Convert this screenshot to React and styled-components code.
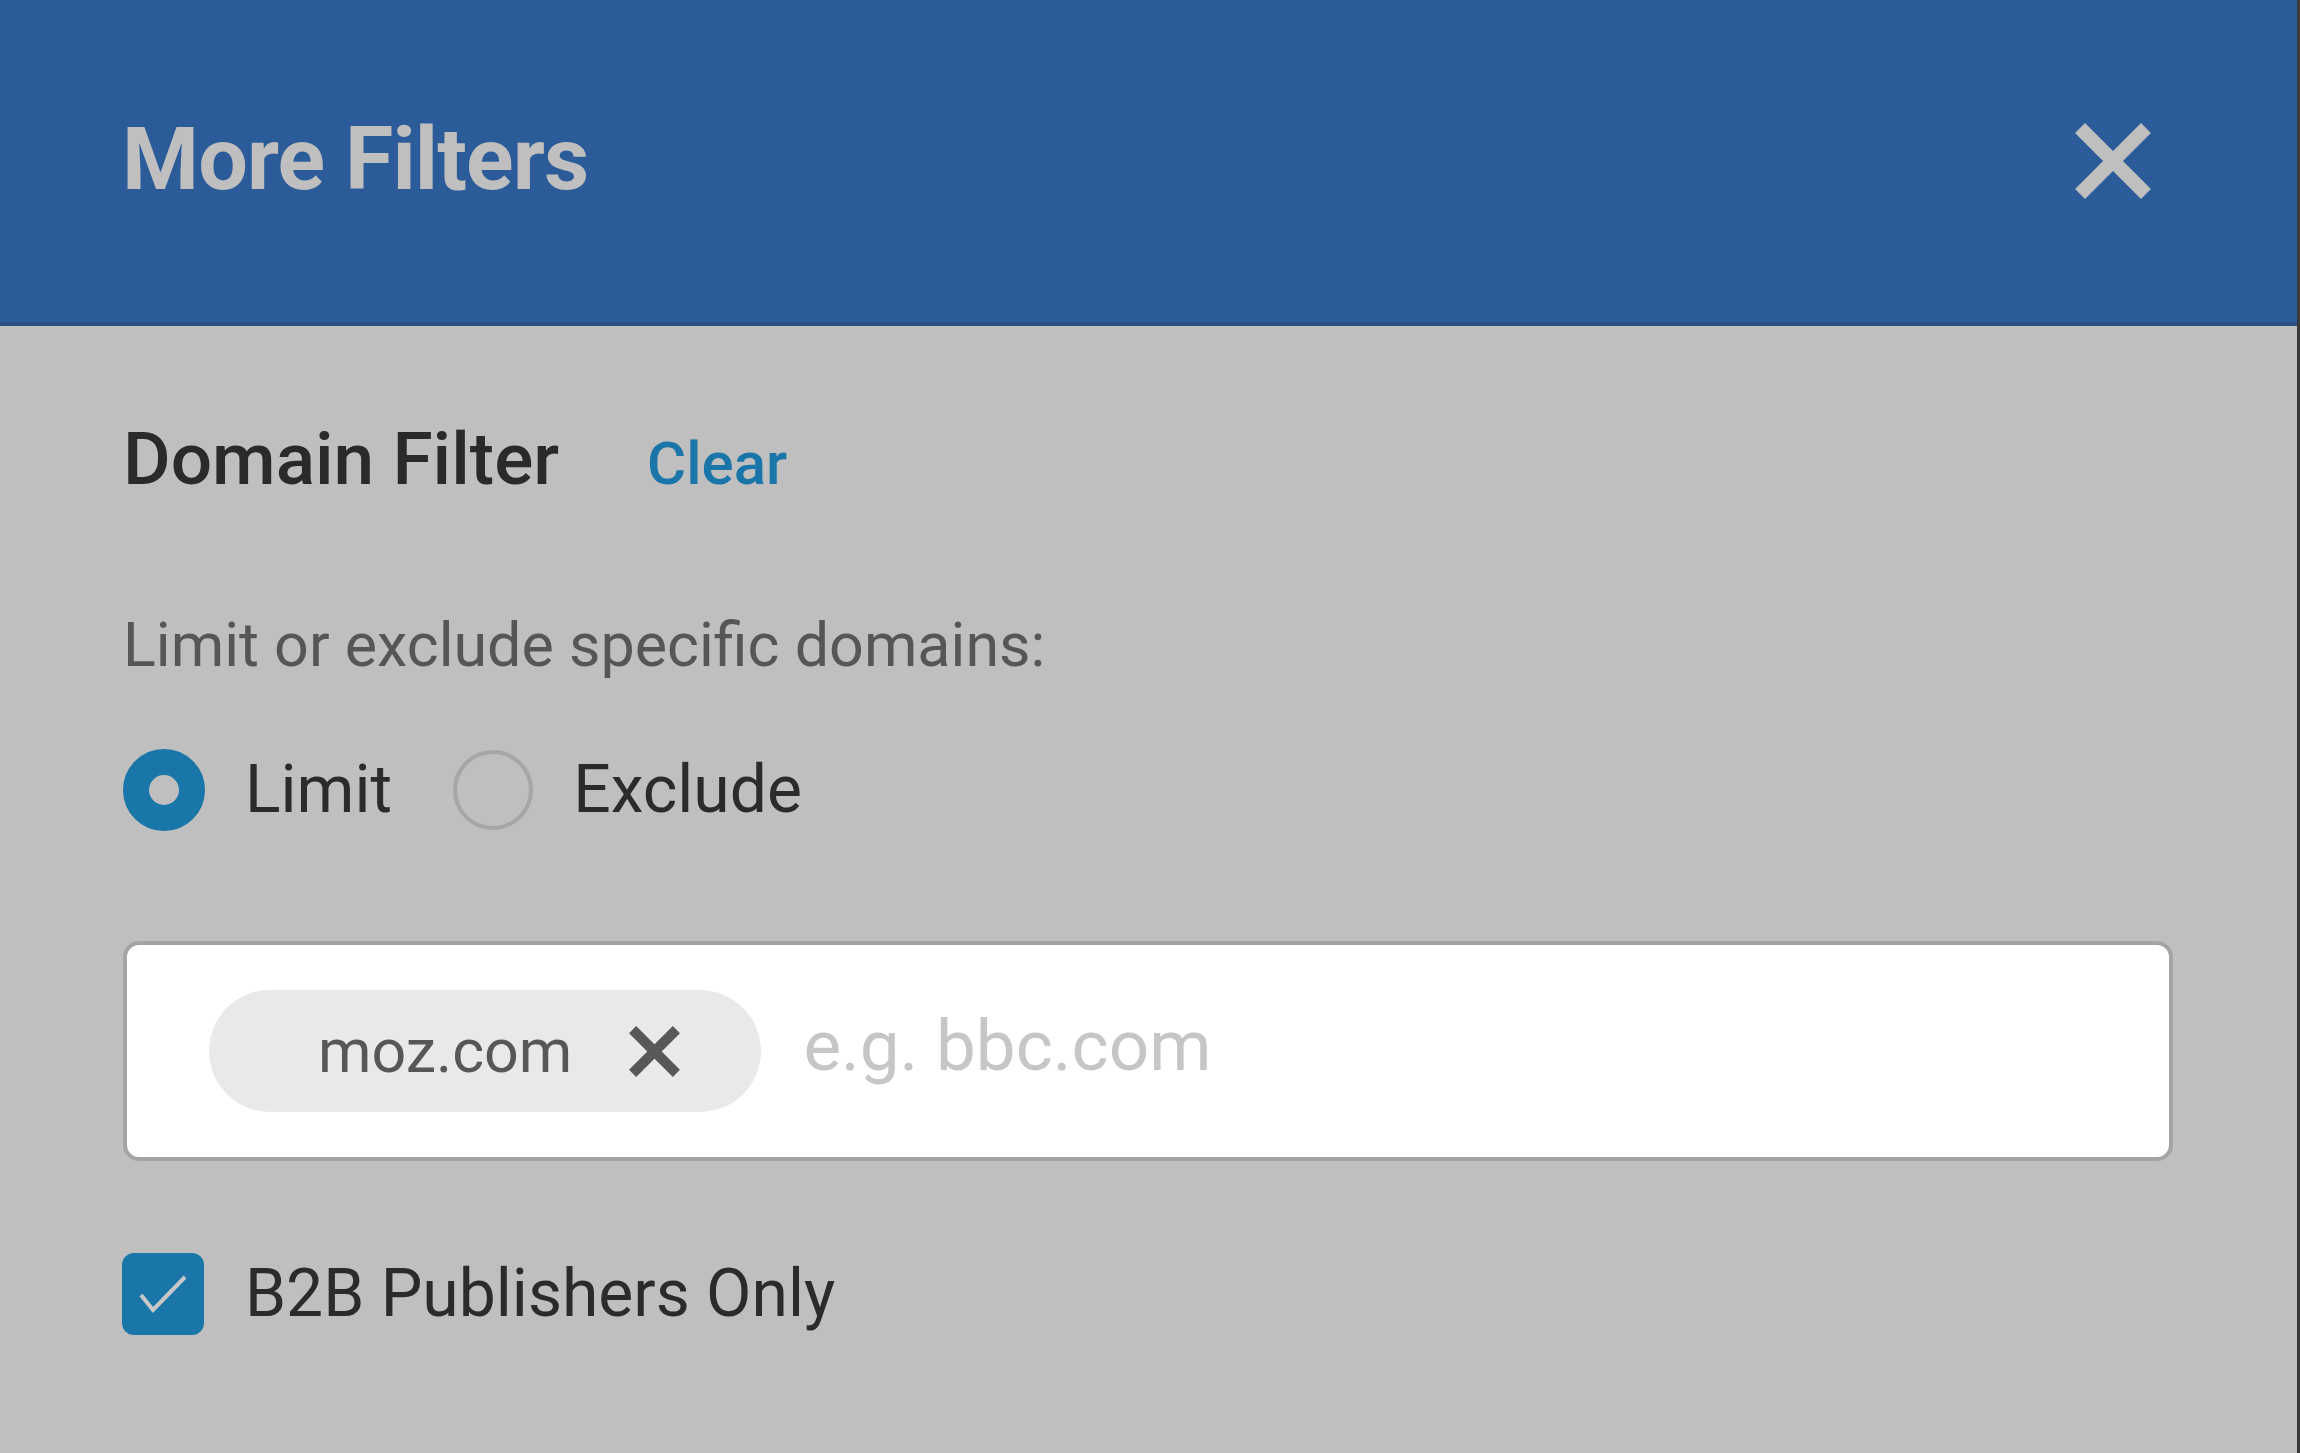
import React, { useState } from "react"
import styled, { createGlobalStyle } from "styled-components"

const GlobalStyle = createGlobalStyle`
  html, body {
    margin: 0;
    padding: 0;
    background: #3a3a3a;
  }
  * {
    box-sizing: border-box;
  }
`

const Panel = styled.div`
  width: 2297px;
  min-height: 100vh;
  background: #bfbfbf;
  font-family: Roboto, "Liberation Sans", sans-serif;
  display: flex;
  flex-direction: column;
`

const Header = styled.header`
  height: 326px;
  background: #2b5b98;
  border-bottom: 4px solid #2a4f82;
  display: flex;
  align-items: center;
  justify-content: space-between;
  padding: 0 146px 0 122px;
`

const Title = styled.h1`
  margin: 0 0 4px 0;
  font-size: 88px;
  line-height: 1;
  font-weight: 700;
  color: #bfbfbf;
  letter-spacing: -0.9px;
`

const CloseButton = styled.button`
  width: 76px;
  height: 76px;
  padding: 0;
  border: 0;
  background: none;
  cursor: pointer;
  display: flex;
`

const Body = styled.div`
  display: flex;
  flex-direction: column;
  padding: 97px 124px 0 123px;
`

const SectionHead = styled.div`
  display: flex;
  align-items: baseline;
  gap: 88px;
`

const SectionTitle = styled.h2`
  margin: 0;
  font-size: 73px;
  line-height: 1;
  font-weight: 500;
  color: #2a2a2a;
`

const ClearLink = styled.a`
  font-size: 60px;
  line-height: 1;
  font-weight: 500;
  color: #1a75a8;
  cursor: pointer;
`

const Description = styled.p`
  margin: 119px 0 0 0;
  font-size: 61px;
  line-height: 1;
  color: #565656;
`

const RadioRow = styled.div`
  display: flex;
  align-items: center;
  margin-top: 73px;
`

const RadioOption = styled.label`
  display: flex;
  align-items: center;
  gap: 40px;
  margin-right: 61px;
  cursor: pointer;
`

const RadioCircle = styled.span`
  width: ${p => (p.checked ? 82 : 80)}px;
  height: ${p => (p.checked ? 82 : 80)}px;
  border-radius: 50%;
  border: ${p => (p.checked ? "26px solid #1a75a8" : "4px solid #a6a6a6")};
  background: #bfbfbf;
  flex-shrink: 0;
`

const OptionText = styled.span`
  font-size: 66px;
  line-height: 1;
  color: #2b2b2b;
`

const TagInput = styled.div`
  margin-top: 110px;
  height: 220px;
  background: #fff;
  border: 4px solid #a4a4a4;
  border-radius: 16px;
  display: flex;
  align-items: center;
  padding-left: 82px;
`

const Chip = styled.span`
  height: 122px;
  border-radius: 61px;
  background: #e9e9e9;
  display: flex;
  align-items: center;
  gap: 57px;
  padding: 0 81px 0 109px;
  flex-shrink: 0;
`

const ChipText = styled.span`
  font-size: 61px;
  line-height: 1;
  color: #575757;
`

const ChipRemove = styled.button`
  width: 51px;
  height: 51px;
  padding: 0;
  border: 0;
  background: none;
  display: flex;
  cursor: pointer;
`

const DomainInput = styled.input`
  flex: 1;
  min-width: 0;
  margin: 0 40px 12px 42px;
  border: 0;
  outline: none;
  background: transparent;
  font-family: inherit;
  font-size: 71px;
  line-height: 1;
  padding: 0;
  color: #2b2b2b;
  &::placeholder {
    color: #c6c6c6;
  }
`

const CheckRow = styled.label`
  display: flex;
  align-items: center;
  gap: 41px;
  margin-top: 92px;
  cursor: pointer;
`

const CheckBox = styled.span`
  width: 82px;
  height: 82px;
  border-radius: 12px;
  background: #1a76a8;
  display: flex;
  flex-shrink: 0;
  margin-left: -1px;
`

const Cross = ({ size, stroke, color }) => {
  const a = stroke * 0.36
  const b = size - a
  return (
    <svg width={size} height={size} viewBox={`0 0 ${size} ${size}`}>
      <path
        d={`M${a} ${a}L${b} ${b}M${b} ${a}L${a} ${b}`}
        stroke={color}
        strokeWidth={stroke}
        fill="none"
      />
    </svg>
  )
}

export default function App() {
  const [mode, setMode] = useState("limit")
  const [b2b, setB2b] = useState(true)

  return (
    <>
      <GlobalStyle />
      <Panel>
        <Header>
          <Title>More Filters</Title>
          <CloseButton aria-label="Close">
            <Cross size={76} stroke={14} color="#bfbfbf" />
          </CloseButton>
        </Header>

        <Body>
          <SectionHead>
            <SectionTitle>Domain Filter</SectionTitle>
            <ClearLink>Clear</ClearLink>
          </SectionHead>

          <Description>Limit or exclude specific domains:</Description>

          <RadioRow>
            <RadioOption onClick={() => setMode("limit")}>
              <RadioCircle checked={mode === "limit"} />
              <OptionText>Limit</OptionText>
            </RadioOption>
            <RadioOption onClick={() => setMode("exclude")}>
              <RadioCircle checked={mode === "exclude"} />
              <OptionText>Exclude</OptionText>
            </RadioOption>
          </RadioRow>

          <TagInput>
            <Chip>
              <ChipText>moz.com</ChipText>
              <ChipRemove aria-label="Remove moz.com">
                <Cross size={51} stroke={10} color="#585858" />
              </ChipRemove>
            </Chip>
            <DomainInput placeholder="e.g. bbc.com" />
          </TagInput>

          <CheckRow onClick={() => setB2b(!b2b)}>
            <CheckBox>
              {b2b && (
                <svg width="82" height="82" viewBox="0 0 82 82">
                  <path
                    d="M19 42L31 57L63 24"
                    stroke="#c8c8c8"
                    strokeWidth="4"
                    fill="none"
                  />
                </svg>
              )}
            </CheckBox>
            <OptionText>B2B Publishers Only</OptionText>
          </CheckRow>
        </Body>
      </Panel>
    </>
  )
}
